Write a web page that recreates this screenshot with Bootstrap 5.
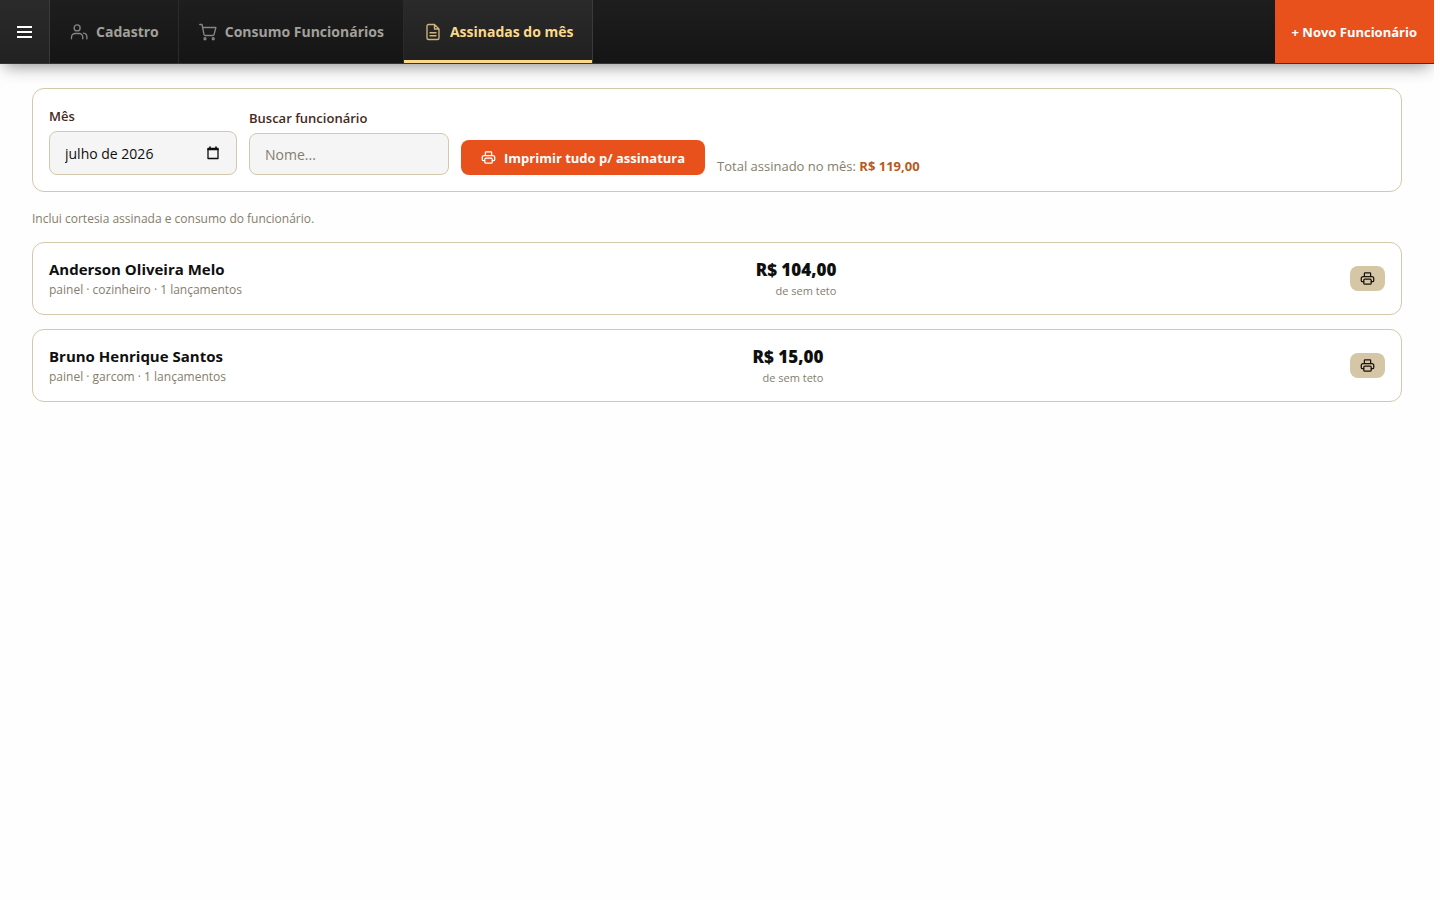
<!DOCTYPE html>
<html lang="pt-BR">
<head>
<meta charset="utf-8">
<meta name="viewport" content="width=device-width, initial-scale=1">
<title>Assinadas do mês</title>
<link href="https://cdn.jsdelivr.net/npm/bootstrap@5.3.0/dist/css/bootstrap.min.css" rel="stylesheet">
<style>
  body { font-family: "Open Sans", "Noto Sans", sans-serif; font-size: 13px; line-height: 18px; color: #0f0f0f; background: #fefefe; padding-right: 6px; }
  svg { fill: none; stroke: currentColor; stroke-width: 2; stroke-linecap: round; stroke-linejoin: round; flex: none; }
  .topbar { height: 64px; background: linear-gradient(#1e1e1e, #151515); border-bottom: 1px solid #3d3426; box-shadow: 0 6px 16px -4px rgba(0,0,0,.45); clip-path: inset(0 0 -30px 0); }
  .menu-btn { width: 50px; color: #fff; background: linear-gradient(#2a2a2a, #222); border: 0; border-right: 1px solid #3a3a3a; }
  .menu-btn svg { stroke-linecap: butt; }
  .tab { color: #a3a09b; font-size: 14px; font-weight: 700; padding: 0 19px 0 20px; border-right: 1px solid #2a2a2a; gap: 8px; text-decoration: none; }
  .tab svg { stroke-width: 1.8; opacity: .8; }
  .tab.current { color: #fcd98a; background: linear-gradient(#2a2a2a, #202020); box-shadow: inset 0 -3px #fcd98a; border-color: #3a3a3a; }
  .new-btn { background: #e8501c; color: #fff; border: 0; font-weight: 700; font-size: 13px; padding: 0 17px; }
  .panel { background: #fff; border: 1px solid #d3c8ab; border-radius: 12px; padding: 16px; }
  .filters { gap: 12px; }
  .filters label { font-weight: 600; font-size: 13px; line-height: 22px; color: #44291e; margin-bottom: 4px; }
  .field { background: #f5f5f5; border: 1px solid #d3c8ab; border-radius: 8px; padding: 0 15px; height: 42px; font-size: 14px; color: #0f0f0f; }
  .field::placeholder { color: #857d6d; }
  .month-box { width: 188px; }
  .month-box .field { height: 44px; }
  .month-box svg { right: 17px; top: 15px; }
  .search-box { width: 200px; }
  .print-all { height: 35px; background: #e8501c; color: #fff; border: 0; border-radius: 8px; padding: 0 20px; font-weight: 700; font-size: 13px; gap: 8px; }
  .muted { color: #857d6d; }
  .note { font-size: 12px; line-height: 22px; margin-bottom: 12px; }
  .total { color: #b85a1c; }
  .people { gap: 14px; }
  .person-card { padding: 15px 16px; }
  .person { font-size: 15px; font-weight: 700; line-height: 22px; }
  .amount { font-size: 17px; font-weight: 800; line-height: 24px; }
  .sub { font-size: 12px; line-height: 19px; }
  .limit { font-size: 11px; line-height: 17px; }
  .print-one { width: 35px; height: 25px; border: 0; border-radius: 8px; background: #d5c6a6; color: #1a120c; }
</style>
</head>
<body>
<svg class="d-none" aria-hidden="true">
  <symbol id="printer" viewBox="0 0 24 24"><path d="M7 9V4a1 1 0 0 1 1-1h8a1 1 0 0 1 1 1v5M6 17H4a2 2 0 0 1-2-2v-3a3 3 0 0 1 3-3h14a3 3 0 0 1 3 3v3a2 2 0 0 1-2 2h-2"/><rect x="6" y="13" width="12" height="8" rx="2"/></symbol>
</svg>
<header class="topbar d-flex align-items-stretch">
  <button type="button" class="menu-btn d-flex align-items-center justify-content-center p-0" aria-label="Menu">
    <svg width="15" height="14" viewBox="0 0 15 14"><path d="M0 2h15M0 7h15M0 12h15"/></svg>
  </button>
  <nav class="d-flex align-items-stretch" aria-label="Seções">
    <a href="#" class="tab d-flex align-items-center"><svg width="18" height="18" viewBox="0 0 24 24"><path d="M2 21v-2a5 5 0 0 1 5-5h5a5 5 0 0 1 5 5v2"/><circle cx="9.5" cy="6.500" r="4"/><path d="M18 13.500a5 5 0 0 1 4.500 5V21"/></svg>Cadastro</a>
    <a href="#" class="tab d-flex align-items-center"><svg width="18" height="18" viewBox="0 0 24 24"><circle cx="8" cy="21" r="1.300"/><circle cx="19" cy="21" r="1.300"/><path d="M1 2h3l2.700 13.500a1.500 1.500 0 0 0 1.500 1.200h10.300a1.500 1.500 0 0 0 1.500-1.200L22.500 6H5"/></svg>Consumo Funcionários</a>
    <a href="#" class="tab current d-flex align-items-center" aria-current="page"><svg width="18" height="18" viewBox="0 0 24 24"><path d="M14 2H6a2 2 0 0 0-2 2v16a2 2 0 0 0 2 2h12a2 2 0 0 0 2-2V8zM14 2v6h6M8 13h8M8 17h8"/></svg>Assinadas do mês</a>
  </nav>
  <button type="button" class="new-btn ms-auto">+ Novo Funcionário</button>
</header>
<main class="px-4 mx-2 pt-4">
  <form class="panel filters d-flex flex-wrap align-items-end mb-3">
    <div class="month-box">
      <label for="mes" class="d-block">Mês</label>
      <div class="position-relative">
        <input id="mes" class="field w-100 d-block" type="text" value="julho de 2026">
        <svg class="position-absolute" width="14" height="14" viewBox="0 0 14 14" aria-hidden="true"><rect x="2" y="2.500" width="10" height="10" stroke-width="1.300"/><path d="M2 3.500h10M4 1v2M10 1v2" stroke-width="1.600"/></svg>
      </div>
    </div>
    <div class="search-box">
      <label for="busca" class="d-block">Buscar funcionário</label>
      <input id="busca" class="field w-100 d-block" type="text" placeholder="Nome...">
    </div>
    <button type="button" class="print-all d-flex align-items-center"><svg width="15" height="15"><use href="#printer"/></svg>Imprimir tudo p/ assinatura</button>
    <div class="muted">Total assinado no mês: <strong class="total">R$ 119,00</strong></div>
  </form>
  <p class="muted note">Inclui cortesia assinada e consumo do funcionário.</p>
  <section class="people d-flex flex-column">
    <article class="panel person-card d-flex align-items-center justify-content-between">
      <div><div class="person">Anderson Oliveira Melo</div><div class="sub muted">painel · cozinheiro · 1 lançamentos</div></div>
      <div class="text-end"><div class="amount">R$ 104,00</div><div class="limit muted">de sem teto</div></div>
      <button type="button" class="print-one d-flex align-items-center justify-content-center p-0" aria-label="Imprimir"><svg width="15" height="15"><use href="#printer"/></svg></button>
    </article>
    <article class="panel person-card d-flex align-items-center justify-content-between">
      <div><div class="person">Bruno Henrique Santos</div><div class="sub muted">painel · garcom · 1 lançamentos</div></div>
      <div class="text-end"><div class="amount">R$ 15,00</div><div class="limit muted">de sem teto</div></div>
      <button type="button" class="print-one d-flex align-items-center justify-content-center p-0" aria-label="Imprimir"><svg width="15" height="15"><use href="#printer"/></svg></button>
    </article>
  </section>
</main>
<script src="https://cdn.jsdelivr.net/npm/bootstrap@5.3.0/dist/js/bootstrap.bundle.min.js"></script>
</body>
</html>
